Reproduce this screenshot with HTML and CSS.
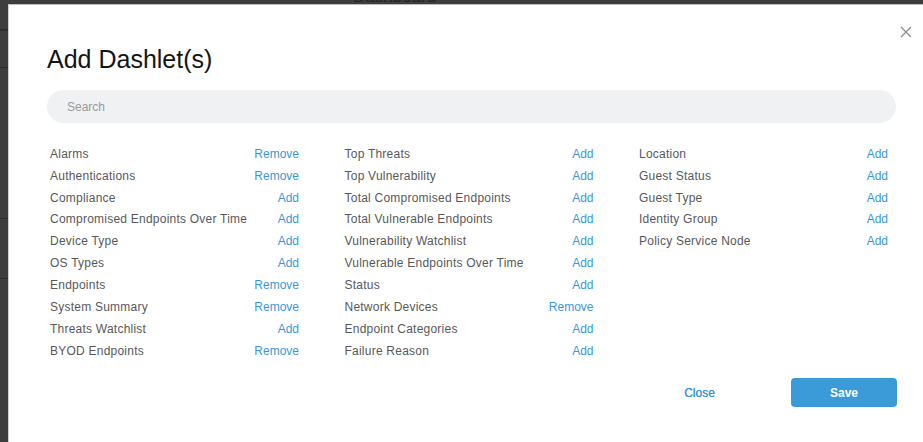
FILE: index.html
```html
<!DOCTYPE html>
<html lang="en">
<head>
<meta charset="utf-8">
<title>Add Dashlet(s)</title>
<link rel="stylesheet" href="styles.css">
</head>
<body>
<div class="backdrop">
  <div class="page-title">Dashboard</div>
  <div class="bg-line l1"></div>
  <div class="bg-line l2"></div>
  <div class="bg-line l3"></div>
  <div class="bg-line l4"></div>
</div>
<div class="modal">
  <button class="close-x" aria-label="Close">
    <svg width="12" height="12" viewBox="0 0 12 12"><path d="M1 1L11 11M11 1L1 11" stroke="#8a8a8a" stroke-width="1.2" fill="none"/></svg>
  </button>
  <h1 class="title">Add Dashlet(s)</h1>
  <div class="search">Search</div>
  <div class="columns">
    <ul class="col">
      <li><span>Alarms</span><a class="act">Remove</a></li>
      <li><span>Authentications</span><a class="act">Remove</a></li>
      <li><span>Compliance</span><a class="act">Add</a></li>
      <li><span>Compromised Endpoints Over Time</span><a class="act">Add</a></li>
      <li><span>Device Type</span><a class="act">Add</a></li>
      <li><span>OS Types</span><a class="act">Add</a></li>
      <li><span>Endpoints</span><a class="act">Remove</a></li>
      <li><span>System Summary</span><a class="act">Remove</a></li>
      <li><span>Threats Watchlist</span><a class="act">Add</a></li>
      <li><span>BYOD Endpoints</span><a class="act">Remove</a></li>
    </ul>
    <ul class="col">
      <li><span>Top Threats</span><a class="act">Add</a></li>
      <li><span>Top Vulnerability</span><a class="act">Add</a></li>
      <li><span>Total Compromised Endpoints</span><a class="act">Add</a></li>
      <li><span>Total Vulnerable Endpoints</span><a class="act">Add</a></li>
      <li><span>Vulnerability Watchlist</span><a class="act">Add</a></li>
      <li><span>Vulnerable Endpoints Over Time</span><a class="act">Add</a></li>
      <li><span>Status</span><a class="act">Add</a></li>
      <li><span>Network Devices</span><a class="act">Remove</a></li>
      <li><span>Endpoint Categories</span><a class="act">Add</a></li>
      <li><span>Failure Reason</span><a class="act">Add</a></li>
    </ul>
    <ul class="col">
      <li><span>Location</span><a class="act">Add</a></li>
      <li><span>Guest Status</span><a class="act">Add</a></li>
      <li><span>Guest Type</span><a class="act">Add</a></li>
      <li><span>Identity Group</span><a class="act">Add</a></li>
      <li><span>Policy Service Node</span><a class="act">Add</a></li>
    </ul>
  </div>
  <div class="footer">
    <button class="btn-close">Close</button>
    <button class="btn-save">Save</button>
  </div>
</div>
</body>
</html>
```

FILE: styles.css
```css
* { box-sizing: border-box; }
html, body {
  margin: 0;
  padding: 0;
  width: 923px;
  height: 442px;
  overflow: hidden;
  background: #3d3d3d;
  font-family: "Liberation Sans", Arial, sans-serif;
}
.backdrop {
  position: absolute;
  inset: 0;
}
.page-title {
  position: absolute;
  left: 353px;
  top: -13px;
  font-size: 17px;
  color: #262626;
}
.bg-line {
  position: absolute;
  left: 0;
  width: 100%;
  height: 1px;
  background: #2e2e2e;
}
.l1 { top: 29px; height: 2px; }
.l2 { top: 67px; }
.l3 { top: 218px; }
.l4 { top: 278px; }

.modal {
  position: absolute;
  left: 8px;
  top: 4px;
  width: 926px;
  height: 460px;
  background: #fff;
  border-left: 1px solid #cfcfcf;
  border-top: 1px solid #bdbdbd;
  padding: 0 38px 0 38px;
}
.close-x {
  position: absolute;
  top: 21px;
  right: 22px;
  background: none;
  border: 0;
  padding: 0;
  width: 12px;
  height: 12px;
  cursor: pointer;
}
.close-x svg { display: block; }
.title {
  margin: 39px 0 0 0;
  font-size: 25px;
  font-weight: normal;
  line-height: 30px;
  color: #141414;
}
.search {
  margin-top: 16px;
  height: 33px;
  border-radius: 17px;
  background: #f0f1f3;
  color: #9a9a9a;
  font-size: 12px;
  line-height: 34px;
  padding-left: 20px;
}
.columns {
  display: grid;
  grid-template-columns: 249px 249px 249px;
  column-gap: 45.5px;
  padding-left: 3px;
  margin-top: 20px;
}
.col {
  list-style: none;
  margin: 0;
  padding: 0;
}
.col li {
  display: flex;
  justify-content: space-between;
  align-items: center;
  height: 21.85px;
  font-size: 12px;
  color: #58585b;
}
.col li span {
  letter-spacing: 0.23px;
}
.act {
  color: #3a97d6;
  cursor: pointer;
}
.footer {
  position: absolute;
  left: 0;
  top: 373px;
  width: 888px;
  display: flex;
  justify-content: flex-end;
  align-items: center;
  gap: 61px;
}
.btn-close {
  background: none;
  border: 0;
  color: #3a97d6;
  font-family: inherit;
  font-size: 12px;
  font-weight: normal;
  text-shadow: 0 0 0.4px #3a97d6;
  width: 61px;
  padding: 0;
  cursor: pointer;
}
.btn-save {
  width: 106px;
  height: 29px;
  background: #3a9bd8;
  border: 0;
  border-radius: 4px;
  color: #fff;
  font-family: inherit;
  font-size: 12px;
  font-weight: bold;
  cursor: pointer;
}
```
